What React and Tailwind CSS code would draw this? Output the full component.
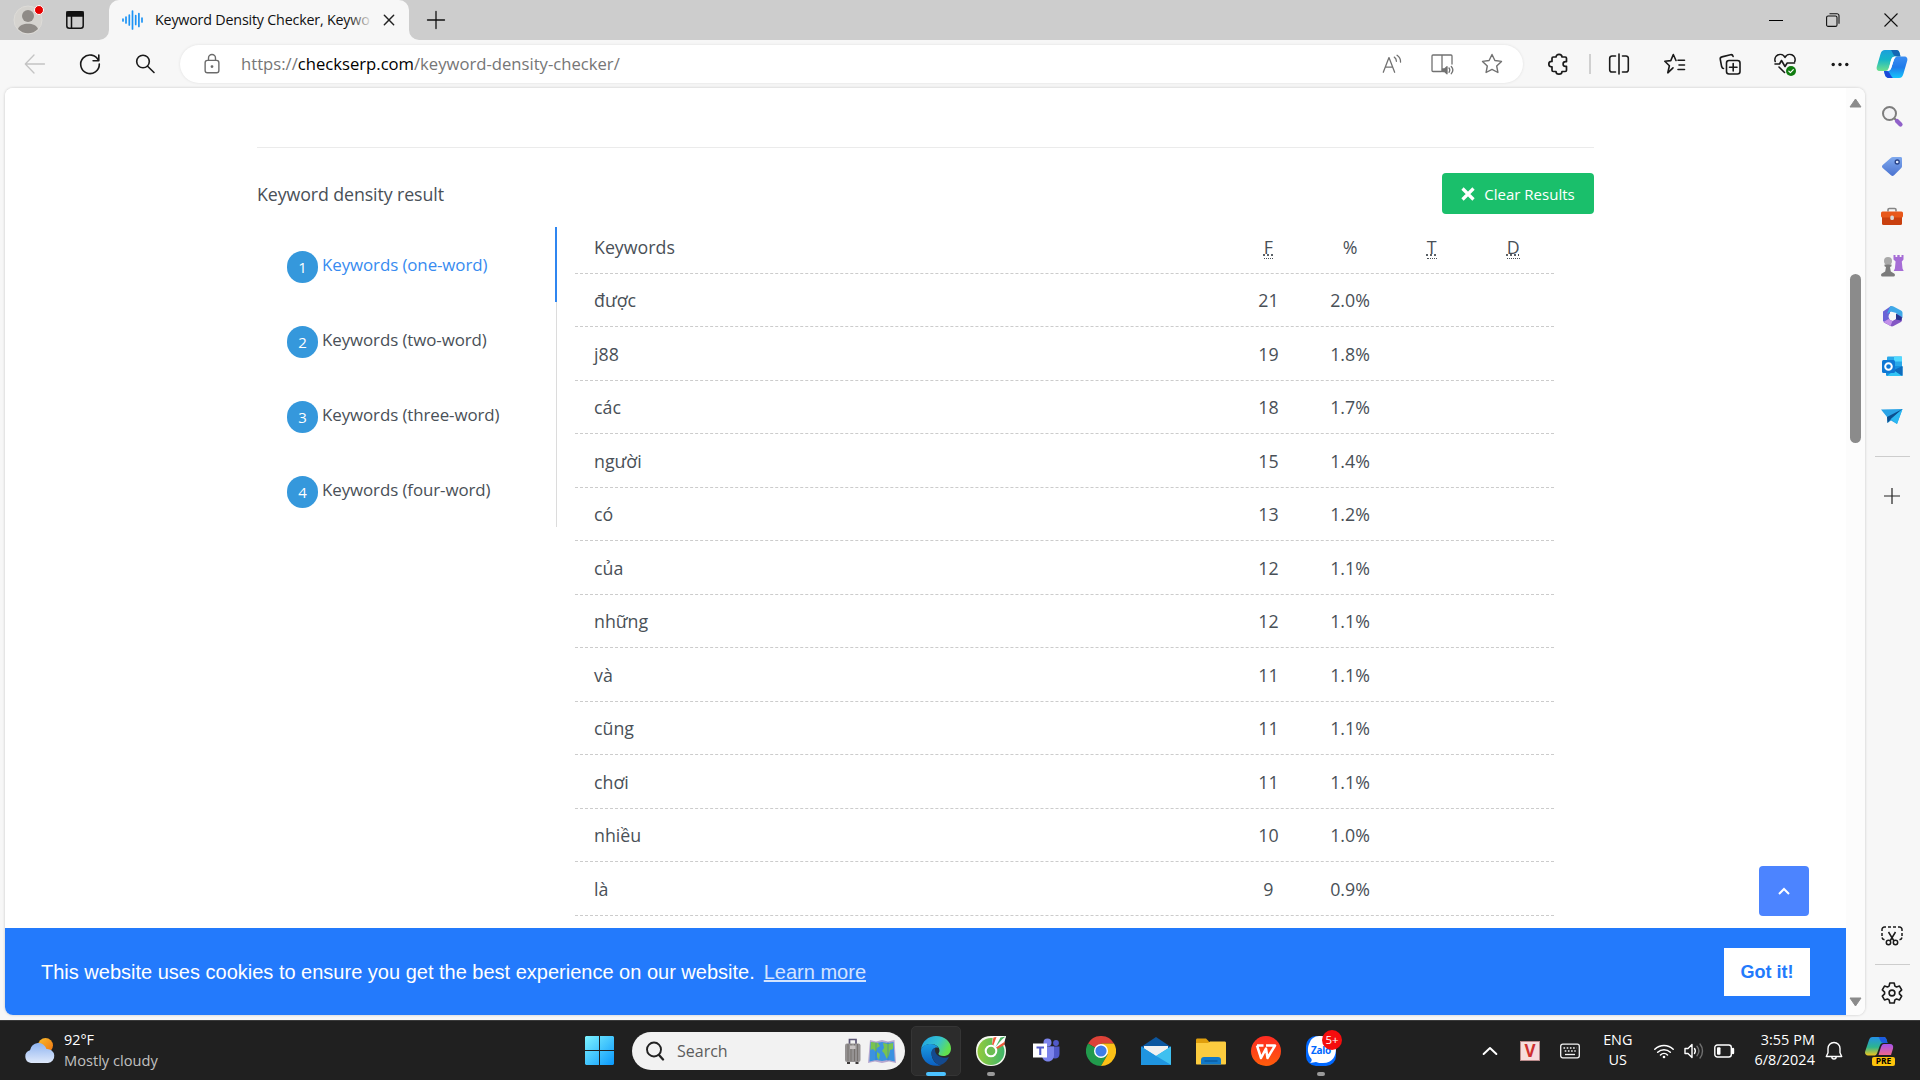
import React from "react";

const ROWS = [
  ["được", "21", "2.0%"],
  ["j88", "19", "1.8%"],
  ["các", "18", "1.7%"],
  ["người", "15", "1.4%"],
  ["có", "13", "1.2%"],
  ["của", "12", "1.1%"],
  ["những", "12", "1.1%"],
  ["và", "11", "1.1%"],
  ["cũng", "11", "1.1%"],
  ["chơi", "11", "1.1%"],
  ["nhiều", "10", "1.0%"],
  ["là", "9", "0.9%"],
];

const NAV = ["Keywords (one-word)", "Keywords (two-word)", "Keywords (three-word)", "Keywords (four-word)"];

function Line({ size = 24, className = "", sw = 1.4, children }) {
  return (
    <svg width={size} height={size} viewBox="0 0 24 24" fill="none" stroke="currentColor" strokeWidth={sw} strokeLinecap="round" strokeLinejoin="round" className={"shrink-0 " + className}>
      {children}
    </svg>
  );
}

const STAR = "M12 2.5l2.9 6 6.6.9-4.8 4.600 1.200 6.500-5.900-3.100-5.900 3.100 1.200-6.500-4.800-4.600 6.600-.9z";

function TabStrip() {
  return (
    <div className="flex h-10 shrink-0 bg-[#cdcdcd]">
      <svg width="32" height="32" viewBox="0 0 32 32" className="ml-3 mt-1 shrink-0">
        <circle cx="16" cy="16" r="14" fill="#d5d3cf" stroke="#dedcd8" />
        <circle cx="16" cy="12" r="6" fill="#8f8b87" />
        <path d="M6 25c2-7 18-7 20 0a14 14 0 0 1-20 0z" fill="#8f8b87" />
        <circle cx="27" cy="6" r="4.500" fill="#e60000" stroke="#fff" />
      </svg>
      <svg width="18" height="18" viewBox="0 0 18 18" className="ml-[22px] mt-[11px] shrink-0" fill="none" stroke="#111" strokeWidth="1.500">
        <rect x="0.800" y="0.800" width="16.400" height="16.400" rx="2.500" />
        <path d="M1 1h16v4H1z" fill="#111" />
        <path d="M5.500 5v12" />
      </svg>
      <div className="relative ml-[25px] flex h-10 w-[300px] items-center rounded-t-[10px] bg-[#f7f7f7] pb-2">
        <svg width="10" height="10" viewBox="0 0 10 10" className="absolute -left-[10px] bottom-0"><path d="M10 0v10H0A10 10 0 0 0 10 0z" fill="#f7f7f7" /></svg>
        <svg width="10" height="10" viewBox="0 0 10 10" className="absolute -right-[10px] bottom-0"><path d="M0 0v10h10A10 10 0 0 1 0 0z" fill="#f7f7f7" /></svg>
        <svg width="21" height="20" viewBox="0 0 21 20" className="ml-[13px] mt-2 shrink-0" stroke="#1c93f5" strokeWidth="1.700" strokeLinecap="round">
          <path d="M1 9v2M4 7v6M7.300 5v10M10.500 1v18M13.700 5.500v9M16.900 3.500v13M20 8v4" />
        </svg>
        <div className="relative ml-[12px] mt-2 w-[218px] overflow-hidden whitespace-nowrap text-[14.3px] leading-5 tracking-[-0.2px] text-[#111]">
          Keyword Density Checker, Keywo
          <div className="absolute inset-y-0 right-0 w-6 bg-gradient-to-r from-transparent to-[#f7f7f7]" />
        </div>
        <Line size={16} sw={2.200} className="ml-[8px] mt-2 text-[#222]"><path d="M5 5l14 14M19 5L5 19" /></Line>
      </div>
      <Line size={24} sw={1.300} className="ml-[15px] mt-2 text-[#111]"><path d="M3.500 12h17M12 3.500v17" /></Line>
      <div className="ml-auto flex items-center text-black">
        <svg width="14" height="14" className="mr-[43px]" stroke="#000"><path d="M0 7.500h14" /></svg>
        <svg width="14" height="14" viewBox="0 0 14 14" className="mr-[44px]" fill="none" stroke="#111" strokeWidth="1.100"><rect x="0.600" y="3" width="10.400" height="10.400" rx="1.500" /><path d="M3.500.8h7.500a2 2 0 0 1 2 2v8" /></svg>
        <svg width="14" height="14" viewBox="0 0 14 14" className="mr-[22px]" stroke="#111" strokeWidth="1.100"><path d="M.5.5l13 13M13.500.5l-13 13" /></svg>
      </div>
    </div>
  );
}

function CopilotEdge() {
  return (
    <svg width="32" height="30" viewBox="0 0 32 30" className="ml-[24px] shrink-0">
      <defs>
        <linearGradient id="ce1" x1="0" y1="0" x2="0" y2="1"><stop offset="0" stopColor="#1b9fdc" /><stop offset=".45" stopColor="#16b5c8" /><stop offset="1" stopColor="#6fe08c" /></linearGradient>
        <linearGradient id="ce2" x1="0" y1="0" x2="0" y2="1"><stop offset="0" stopColor="#3b8df2" /><stop offset=".5" stopColor="#1f7bea" /><stop offset="1" stopColor="#15c5fb" /></linearGradient>
      </defs>
      <path d="M9 1h11c3 0 3.500 2 4.500 6.500H20c-3 0-4 1-4.800 3.500l-2.500 8c-.9 2.500-2 3-4.500 3H4c-3 0-4-2-3-5L4.500 5C5.500 2 6.500 1 9 1z" fill="url(#ce1)" />
      <path d="M15 1h5c3 0 3.500 2 4.500 6.500H20c-2.500 0-3.500-4.500-5-6.500z" fill="#1468b4" />
      <path d="M23 29H13c-3 0-4-2-5-7h2.500c2.500 0 4-1 4.800-3.500l2.500-7.500c.9-2.500 2-3.500 4.500-3.500H28c3 0 4 2 3 5l-3.500 12c-.9 3-2 4.500-4.500 4.500z" fill="url(#ce2)" />
      <path d="M17 29h-4c-3 0-4-2-5-7h2.500c3 0 4 5 6.500 7z" fill="#1b49d8" />
      <path d="M15 11c.8-2.500 2-3.500 4.500-3.500h2.300c-2.300 0-3 1-4 3.500l-2.500 8c-.6 2-1.800 3-4 3 1-.6 1.500-2 2-3.500z" fill="#fff" />
    </svg>
  );
}

function Toolbar() {
  return (
    <div className="flex h-12 shrink-0 items-center bg-[#f7f7f7] text-[#1a1a1a]">
      <Line sw={1.300} className="ml-[23px] text-[#c4c4c4]"><path d="M21.500 12h-19M11 3l-8.700 9 8.700 9" /></Line>
      <Line sw={1.600} className="ml-[31px]"><path d="M20.500 8.500A9.300 9.300 0 1 0 21.300 12M20.800 3v5.700h-5.700" /></Line>
      <Line sw={1.600} className="ml-[31px]"><circle cx="10" cy="9.500" r="6.300" /><path d="M14.600 14.200L21 20.500" /></Line>
      <div className="ml-[23px] flex h-[38px] w-[1343px] items-center rounded-full bg-white shadow-[0_0_3px_rgba(0,0,0,0.1)]">
        <Line size={22} sw={1.500} className="ml-[21px] text-[#6b6b6b]"><rect x="4.500" y="8" width="15" height="13.500" rx="2.500" /><path d="M8.200 8V5.500a3.800 3.800 0 0 1 7.600 0V8" /><circle cx="12" cy="14.800" r=".8" fill="currentColor" /></Line>
        <span className="ml-[18px] text-[16.65px] text-[#767676]">https://<span className="text-black">checkserp.com</span>/keyword-density-checker/</span>
        <div className="ml-auto flex items-center text-[#717171]">
          <Line size={22} className="mr-[27px]"><path d="M2.500 21L8.700 5l6.200 16M4.800 15.500h7.900M14.500 4.500c1.500 1 2.300 2.700 2.300 4.500M17.500 2.500c2.700 1.800 4 4.500 3.800 7.500" /></Line>
          <Line size={24} sw={1.300} className="mr-[26px]"><path d="M12 3v15.500M12 3H3a1 1 0 0 0-1 1v14.500a1 1 0 0 0 1 1h8.500M12 3h9a1 1 0 0 1 1 1v8" /><path d="M12.500 17h2l2.500-2.200v7L14.500 19.600h-2z" fill="currentColor" /><path d="M19 16c.9 1.200.9 3 0 4.300M21.300 14.500c1.900 2.200 1.900 5 0 7.200" /></Line>
          <Line size={24} sw={1.400} className="mr-[19px]"><path d={STAR} /></Line>
        </div>
      </div>
      <Line sw={1.700} className="ml-[24px]"><path d="M9 5a3 2.700 0 0 1 6 0h3.200c.8 0 1.300.5 1.300 1.300v3.300h-1a2.400 2.400 0 0 0 0 4.800h1v3.800c0 .8-.5 1.300-1.300 1.300H15a3 2.700 0 0 1-6 0H6.300c-.8 0-1.300-.5-1.300-1.300v-3.400h-.5a2.700 2.700 0 0 1 0-5.400H5V6.300C5 5.500 5.500 5 6.300 5z" /></Line>
      <div className="ml-[18px] h-5 w-[2px] bg-[#d0d0d0]" />
      <Line sw={1.600} className="ml-[16px]"><path d="M12 2v20M8.500 4H5a2.300 2.300 0 0 0-2.300 2.300v11.400A2.300 2.300 0 0 0 5 20h3.500M15.500 4H19a2.300 2.300 0 0 1 2.300 2.300v11.400A2.300 2.300 0 0 1 19 20h-3.500" /></Line>
      <Line sw={1.600} className="ml-[32px]"><path d="M15 8.300h6.500M16 13h5.500M15 17.500h6.500M10 15.800l-5.200 5 1.600-7L1.800 9.200l6-.6L10.300 2.500l2.700 6" /></Line>
      <Line sw={1.600} className="ml-[31px]"><rect x="8.500" y="8.500" width="13.500" height="13.500" rx="2.500" /><path d="M15.200 11.500v7.500M11.500 15.200H19M5.500 16.500c-1 0-1.500-.8-1.800-1.700L2.300 7.500c-.3-1.200.5-2.300 1.700-2.600l8.500-2.200c1.200-.3 2.300.5 2.600 1.700" /></Line>
      <Line sw={1.600} className="ml-[31px]"><path d="M2.200 9.500A5.300 5.300 0 0 1 12 5.500a5.300 5.300 0 0 1 9.800 4M2 12h4.500l2-3.500 3.500 6 2.200-3.500h7.300M6 15l5.500 5.500" /><circle cx="18" cy="19" r="5" fill="#107c10" stroke="none" /><path d="M15.800 19.100l1.600 1.600 2.900-3" stroke="#fff" strokeWidth="1.200" /></Line>
      <Line className="ml-[31px]"><g fill="currentColor" stroke="none"><circle cx="5.200" cy="12.500" r="1.700" /><circle cx="12" cy="12.500" r="1.700" /><circle cx="18.800" cy="12.500" r="1.700" /></g></Line>
      <CopilotEdge />
    </div>
  );
}

function Abbr({ children }) {
  return <abbr className="mx-auto border-b border-dotted border-[#495057] leading-[22px] underline decoration-dotted underline-offset-1">{children}</abbr>;
}

function Results() {
  return (
    <div className="flex w-[1841px] shrink-0 flex-col overflow-hidden bg-white text-[17.8px] text-[#495057]">
      <div className="ml-[252px] mt-[59px] w-[1337px] border-t border-[#ebebeb]">
        <div className="mt-[25px] flex h-[41px] items-center justify-between">
          <span className="pt-[2px] tracking-[-0.1px]">Keyword density result</span>
          <button className="flex h-[41px] w-[152px] items-center justify-center gap-[9px] rounded bg-[#1abf6b] text-[15px] text-white">
            <svg width="14" height="14" viewBox="0 0 14 14" stroke="#fff" strokeWidth="3.200"><path d="M1.500 1.500l11 11M12.500 1.500l-11 11" /></svg>
            <span className="pt-px">Clear Results</span>
          </button>
        </div>
        <div className="flex">
          <ul className="mt-[13px] h-[300px] w-[300px] shrink-0 border-r border-[#dcdcdc]">
            {NAV.map((label, i) => (
              <li key={label} className={"flex h-[75px] pl-[30px] pt-6 " + (i === 0 ? "-mr-px border-r-2 border-[#2f86f0] text-[#378bf0]" : "")}>
                <span className="flex h-8 w-[31px] items-center justify-center rounded-full bg-[#3598dc] text-[15px] text-white">{i + 1}</span>
                <span className="ml-[4px] text-[16.9px] leading-7 tracking-[-0.09px]">{label}</span>
              </li>
            ))}
          </ul>
          <div className="ml-[18px] mt-[6px] w-[979px]">
            <div className="grid h-[53.500px] grid-cols-12 items-center border-b border-dashed border-[#ccc] pt-[2px] text-center">
              <span className="col-span-8 pl-[19px] text-left">Keywords</span>
              <Abbr>F</Abbr>
              <span>%</span>
              <Abbr>T</Abbr>
              <Abbr>D</Abbr>
            </div>
            {ROWS.map(([k, f, p]) => (
              <div key={k} className="grid h-[53.500px] grid-cols-12 items-center border-b border-dashed border-[#ccc] pt-[2px] text-center">
                <span className="col-span-8 pl-[19px] text-left">{k}</span>
                <span>{f}</span>
                <span>{p}</span>
              </div>
            ))}
          </div>
        </div>
      </div>
    </div>
  );
}

function CookieBar() {
  return (
    <div className="absolute bottom-0 left-0 flex h-[87px] w-[1841px] items-center bg-[#237afc] pl-9 pr-9 font-['Liberation_Sans',Arial,sans-serif] text-[20px] text-white">
      <span>This website uses cookies to ensure you get the best experience on our website.</span>
      <span className="ml-[9px] underline opacity-80">Learn more</span>
      <button className="ml-auto h-12 w-[86px] bg-white pt-px text-[18px] font-bold text-[#237afc]">Got it!</button>
    </div>
  );
}

function Scrollbar() {
  return (
    <div className="flex flex-1 flex-col items-center bg-[#fcfcfc]">
      <svg width="13" height="10" viewBox="0 0 13 10" className="mt-[10px]"><path d="M6.500 1L12 9H1z" fill="#8b8b8b" stroke="#8b8b8b" strokeLinejoin="round" /></svg>
      <div className="mt-[166px] h-[169px] w-[11px] rounded-full bg-[#8b8b8b]" />
      <svg width="13" height="10" viewBox="0 0 13 10" className="mb-2 mt-auto"><path d="M6.500 9L12 1H1z" fill="#8b8b8b" stroke="#8b8b8b" strokeLinejoin="round" /></svg>
    </div>
  );
}

function Sidebar() {
  const s = { width: 24, height: 24, viewBox: "0 0 24 24" };
  return (
    <div className="flex w-[54px] flex-col items-center pt-[16px]">
      <div className="flex flex-col gap-[26px]">
        <svg {...s}><circle cx="9.500" cy="9.500" r="6.500" fill="#f3f3f5" stroke="#7d7d7d" strokeWidth="2" /><path d="M14.500 14.500l2.500 2.500" stroke="#777" strokeWidth="2" /><path d="M17 17l3.500 3.500" stroke="#9061c9" strokeWidth="4.200" strokeLinecap="round" /></svg>
        <svg {...s}><defs><linearGradient id="tg" x1="0" y1="0" x2="0" y2="1"><stop stopColor="#7fa9ee" /><stop offset="1" stopColor="#4a72d0" /></linearGradient></defs><path d="M13 3h7.500c1 0 1.500.5 1.500 1.500V12c0 1-.3 1.600-1 2.300l-7 7c-1 1-2 1-3 0L2.700 14c-1-1-1-2 0-3l8-7c.7-.7 1.300-1 2.300-1z" fill="url(#tg)" /><circle cx="17.200" cy="8" r="2" fill="#dce8ff" stroke="#2a4488" strokeWidth="1.300" /></svg>
        <svg {...s}><path d="M8 7.500V5.800C8 5 8.500 4.500 9.300 4.500h5.400c.8 0 1.300.5 1.300 1.300v1.700" fill="none" stroke="#858585" strokeWidth="1.600" /><rect x="2" y="9" width="20" height="12" rx="1.500" fill="#c9400f" /><rect x="1" y="7.500" width="22" height="6" rx="1.500" fill="#e8581b" /><rect x="10.300" y="11.500" width="3.600" height="4.500" rx="1.500" fill="#d8d8d8" /></svg>
        <svg {...s}><path d="M13.500 1h2v2h1.800V1h2.400v2h1.800V1h2v4.500l-1.700 2 .7 7 1.200 2.500h-10l1.200-2.500.7-7-2.100-2z" fill="#a66dd6" /><circle cx="8" cy="7" r="4" fill="#a9a9a9" /><path d="M4.500 10.500h7v1.700l-1.500.8.800 4.500 3.700 2.300c.8 1 .5 2.700-.8 2.700H2.300c-1.300 0-1.600-1.700-.8-2.700l3.700-2.300L6 13l-1.500-.8z" fill="#7b7b7b" /></svg>
        <svg {...s}><path d="M3 7.500L11 2l4 2.500-5 3.500v9l-3.500 3L3 17z" fill="#6a63d6" /><path d="M10 2.500c1-.8 2.500-.8 3.500 0l7.500 4c1 .6 1.500 1.500 1.500 2.500v5l-6-3.500V9l-6-1.500L7 10z" fill="#3fa9e8" /><path d="M22 13v3c0 1-.5 1.800-1.500 2.300L13.500 22c-1 .6-2 .6-3 0L3.500 18l5-3 4 2 5-3 0-3.500z" fill="#8457c4" /><path d="M16 9.500l6 4-1 3-5-1z" fill="#27358f" /><path d="M3.500 18l5-3 4 2-2 5z" fill="#c391ea" /><circle cx="12.300" cy="12.500" r="3.700" fill="#f7f7f7" /></svg>
        <svg {...s}><rect x="7" y="2.500" width="15" height="12" rx="1" fill="#28a8ea" /><rect x="14" y="2.500" width="8" height="5" fill="#50d9ff" /><rect x="6" y="12" width="16.500" height="10" rx="1.300" fill="#1490df" /><path d="M22.500 12v10L13 16.500z" fill="#0f6cbd" /><path d="M7 22h15L14 16.500z" fill="#32c5f5" /><rect x="2" y="6" width="13" height="13" rx="1.500" fill="#0f78d4" /><circle cx="8.500" cy="12.500" r="3.300" fill="none" stroke="#fff" strokeWidth="2" /></svg>
        <svg {...s}><path d="M1 5.500L22.500 5 17 20l-6-3.500L7.500 19l-.5-6z" fill="#2aa3e6" /><path d="M22.500 5L7 13l.5 6L11 15z" fill="#0c4f8f" /><path d="M22.500 5L11 15l6 5z" fill="#2bb8f2" /></svg>
      </div>
      <div className="mt-[28px] h-px w-[35px] bg-[#cdcdcd]" />
      <svg width="16" height="16" viewBox="0 0 16 16" className="mt-[31px]" stroke="#222" strokeWidth="1.200"><path d="M0 8h16M8 0v16" /></svg>
      <svg width="22" height="20" viewBox="0 0 22 20" className="mt-auto" fill="none" stroke="#1a1a1a" strokeWidth="1.500"><path d="M1 5V3.500A2.500 2.500 0 0 1 3.500 1H5M7 1h3M12 1h3M17 1h1.500A2.500 2.500 0 0 1 21 3.500V5M1 7v3M21 7v3M1 11.500c.3 1.200 1 2 2.500 2.300M21 11.500c-.3 1.200-1 2-2.500 2.300M7.500 6l5.500 9M14.500 6L9 15" /><circle cx="7.500" cy="16.500" r="2.200" /><circle cx="14.500" cy="16.500" r="2.200" /></svg>
      <div className="mt-[18px] h-px w-[35px] bg-[#cdcdcd]" />
      <svg width="24" height="24" viewBox="0 0 24 24" className="mb-[15px] mt-[16px]" fill="none" stroke="#1a1a1a" strokeWidth="1.600" strokeLinejoin="round"><path d="M9.800 2h4.400l.7 3.100 1.600.9 3-.9 2.200 3.800-2.300 2.200v1.800l2.300 2.200-2.200 3.800-3-.9-1.600.9-.7 3.100H9.800l-.7-3.100-1.600-.9-3 .9-2.200-3.800 2.300-2.200v-1.800L2.300 8.900l2.200-3.800 3 .9 1.600-.9z" /><circle cx="12" cy="12" r="2.900" /></svg>
    </div>
  );
}

function Weather() {
  return (
    <svg width="31" height="28" viewBox="0 0 31 28" className="shrink-0">
      <defs><linearGradient id="cl" x1="0" y1="0" x2="0" y2="1"><stop stopColor="#8fb4f0" /><stop offset="1" stopColor="#dfe9fb" /></linearGradient><linearGradient id="sn" x1="0" y1="0" x2="1" y2="1"><stop stopColor="#f8bd2e" /><stop offset="1" stopColor="#f0720f" /></linearGradient></defs>
      <circle cx="21.500" cy="8.500" r="7.500" fill="url(#sn)" />
      <path d="M7 26a6.500 6.500 0 0 1-1-12.700A8.500 8.500 0 0 1 22.500 12 7 7 0 0 1 24 26z" fill="url(#cl)" />
    </svg>
  );
}

function TaskIcons() {
  const b = { width: 30, height: 30, viewBox: "0 0 30 30" };
  return (
    <div className="ml-[6px] flex items-center">
      <div className="relative flex h-[50px] w-[50px] items-center justify-center rounded-[5px] border border-[#353535] bg-[#2c2c2c]">
        <svg {...b}>
          <defs>
            <linearGradient id="eg" x1="0" y1="0" x2="1" y2=".4"><stop stopColor="#1f9fe5" /><stop offset=".6" stopColor="#35c3d0" /><stop offset="1" stopColor="#62e04e" /></linearGradient>
            <linearGradient id="eb" x1="0" y1="0" x2="0" y2="1"><stop stopColor="#1b9de2" /><stop offset="1" stopColor="#0a5fc2" /></linearGradient>
          </defs>
          <path d="M0 14C1 5 7.500 0 15 0c9 0 15 6 15 12.500 0 5-3.500 7.500-7.500 7.500-3.500 0-5-1.300-5-2.300 0-.8 1-1.200 1-3.200C18.500 11 15 8 10 8 5 8 1 10.500 0 14z" fill="url(#eg)" />
          <path d="M0 14c1-4 5-6 9.500-6 4 0 7 1.800 8 4-3-1.500-7 .8-7 5.500 0 5.500 4 11 9.500 11.700C9 32 0 25 0 14z" fill="url(#eb)" />
          <path d="M10.500 17c0-3 1.700-4.700 4-5-1 1.500-1 8 7 9.500 3 .5 5 0 6.500-.8-2 5-6 7.800-9 8.300-5-1-8.500-7-8.500-12z" fill="#144a8f" />
        </svg>
        <div className="absolute -bottom-px h-[4px] w-5 rounded-full bg-[#4cc2ff]" />
      </div>
      <div className="relative ml-[15px] flex h-[50px] w-[30px] items-center justify-center">
        <svg {...b}>
          <defs><linearGradient id="cc" x1="0" y1="0" x2="1" y2="0"><stop stopColor="#93cb3c" /><stop offset="1" stopColor="#3fb56a" /></linearGradient></defs>
          <path d="M0 15C0 6 6 0 15 0h15l-2 8c1.500 2 2 4.500 2 7 0 9-6 15-15 15S0 24 0 15z" fill="#f4f8ee" />
          <circle cx="15" cy="15.500" r="13.500" fill="url(#cc)" /><path d="M16 8L17 0h13l-3 8-6 4z" fill="#fff" />
          <path d="M17.500 1.500l3-.5-3 8-1.500-.4zM29 5.500l-.8 3.500-7.200 4-1-1.500z" fill="#ef5a3a" /><path d="M29.500.5L26 3.500l-6.500 7.500 5-9.500z" fill="#4cb866" />
          <circle cx="15" cy="15" r="5.300" fill="#6bbd52" stroke="#fff" strokeWidth="2" />
        </svg>
        <div className="absolute bottom-0 h-[4px] w-2 rounded-full bg-[#9a9a9a]" />
      </div>
      <svg width="28" height="26" viewBox="0 0 28 26" className="ml-[27px]">
        <circle cx="14.500" cy="4.500" r="4" fill="#7b83eb" /><circle cx="23" cy="5" r="2.900" fill="#5059c9" />
        <path d="M17 8.500h9.500V16c0 3-2 4.500-4.500 4.500-2 0-3.500-1-4-2z" fill="#5059c9" /><path d="M9 8.500h12V17c0 4-2.500 6.500-6 6.500S9 21 9 17z" fill="#7b83eb" />
        <rect x="0" y="5.500" width="14" height="14" fill="#fff" /><path d="M3.500 8.500h7.500v2H8.300v6.500H6.200v-6.500H3.500z" fill="#5059c9" />
      </svg>
      <svg {...b} className="ml-[25px]">
        <path d="M15 15L2 7.500A15 15 0 0 1 28 7.500H15z" fill="#dd4238" /><path d="M15 15l6.500 3.800L15 30A15 15 0 0 1 2 7.500z" fill="#219a4c" /><path d="M15 7.500h13A15 15 0 0 1 15 30l6.500-11.200z" fill="#fbc117" />
        <circle cx="15" cy="15" r="7" fill="#fff" /><circle cx="15" cy="15" r="5.600" fill="#3f7de8" />
      </svg>
      <svg {...b} className="ml-[25px]">
        <path d="M0 11L15 1l15 10v5H0z" fill="#0c57a0" /><path d="M3 10h24v10H3z" fill="#f1f1f1" /><path d="M0 10.500l15 9.500 15-9.500V29H0z" fill="#2ba5ea" /><path d="M30 10.500V29L15 20z" fill="#3fc0f0" /><path d="M0 10.500L15 20 30 29H0z" fill="#1f95e0" />
      </svg>
      <svg {...b} className="ml-[25px]">
        <path d="M0 4c0-1 .6-1.500 1.500-1.500H10L13 5.500V10H0z" fill="#e09f0c" /><path d="M0 7h12l2-1.500h14.500c1 0 1.500.5 1.500 1.500v20.500c0 .8-.5 1-1 1H1c-.6 0-1-.3-1-1z" fill="#fccc3f" /><path d="M5 28.500V24c0-2 1-3 3-3h14c2 0 3 1 3 3v4.500z" fill="#1179c9" /><path d="M8.500 25h13" stroke="#084f8c" />
      </svg>
      <svg {...b} className="ml-[25px]">
        <defs><linearGradient id="wp" x1="0" y1="0" x2="0" y2="1"><stop stopColor="#ff2a22" /><stop offset="1" stopColor="#ff5d0b" /></linearGradient></defs>
        <circle cx="15" cy="15" r="15" fill="url(#wp)" /><path d="M6 9.500h6.500M6 9.500l4 12.500 5-9.500 1.500 9.500L24 9.500h-9" fill="none" stroke="#fff" strokeWidth="2.500" strokeLinejoin="round" />
      </svg>
      <div className="relative ml-[25px] flex h-[50px] w-[30px] items-center justify-center">
        <svg {...b}>
          <rect x="0" y="0" width="30" height="30" rx="10" fill="#0068ff" /><path d="M4 6C6 1 10 0 15 0c9 0 15 4 15 12s-3 15-13 15c-3 0-5 0-7-1l-6 1c1.500-1.500 2-2.500 1.500-4C1 18 1 11 4 6z" fill="#fff" />
        </svg>
        <span className="absolute left-[5px] top-[17px] text-[10px] font-bold leading-[14px] tracking-[-0.3px] text-[#0068ff]">Zalo</span>
        <span className="absolute left-[16px] top-[4px] flex h-5 w-5 items-center justify-center rounded-full bg-[#f50d0d] text-[11.500px] text-white">5+</span>
        <div className="absolute bottom-0 h-[4px] w-2 rounded-full bg-[#9a9a9a]" />
      </div>
    </div>
  );
}

function Taskbar() {
  return (
    <div className="flex h-[60px] shrink-0 items-center border-t border-[#3a3a3a] bg-[#202020] text-[14.4px] text-white">
      <div className="flex w-[585px] items-center gap-[9px] pl-6">
        <Weather />
        <div className="-mt-[2px] leading-5">
          <div>92°F</div>
          <div className="text-[14.65px] text-[#c0c0c0]">Mostly cloudy</div>
        </div>
      </div>
      <svg width="29" height="29" viewBox="0 0 29 29" className="shrink-0">
        <defs><linearGradient id="ws" x1="0" y1="0" x2="1" y2="1"><stop stopColor="#7df3ff" /><stop offset="1" stopColor="#0a98fc" /></linearGradient></defs>
        <path d="M1 0h13v14H0V1zM15 0h13l1 1v13H15zM0 15h14v14H1l-1-1zM15 15h14v13l-1 1H15z" fill="url(#ws)" />
      </svg>
      <div className="ml-[18px] flex h-[38px] w-[273px] items-center rounded-full bg-[#f2f2f2]">
        <svg width="20" height="20" viewBox="0 0 20 20" className="ml-[13px]" fill="none" stroke="#222" strokeWidth="1.900" strokeLinecap="round"><circle cx="9" cy="8.500" r="7" /><path d="M14 14l4 4.500" strokeWidth="2.300" /></svg>
        <span className="ml-3 text-[16px] text-[#5c5c5c]">Search</span>
        <svg width="18" height="28" viewBox="0 0 18 28" className="ml-auto mr-[6px]">
          <path d="M5.500 8V2.500h6.500V8" fill="none" stroke="#5c5675" strokeWidth="1.700" /><rect x="1" y="6.500" width="15.500" height="18.500" rx="2" fill="#959292" /><path d="M4 7v17M7 7v17M10.500 7v17M13.500 7v17" stroke="#77726f" /><rect x="6" y="8.500" width="5.500" height="3.500" fill="#c8c3c3" /><path d="M3 25h3v2H3zM11.500 25h3v2h-3z" fill="#3d3a3a" />
        </svg>
        <svg width="28" height="26" viewBox="0 0 28 26" className="mr-[9px]">
          <path d="M2 2l6 1.500L14 2l6 1.500L26.500 2 28 25l-7-1.500-7 1.500-7-1.500L0 25z" fill="#b8a8d0" /><path d="M2.500 4l5.500 1v17l-6.500 1.500zM8 5l6-1v19l-6-1zM14 4l6 1v17l-6 1zM20 5l5.500-1 1.300 19.500L20 22z" fill="#3b92e0" /><path d="M3 4l7 1 2 3-3 2-1 4-3-3-2.500 1zM9 14l3 2-1 6-2-3zM15 5l5 1 5-1v6l-3 1-1 5-2 4-3-6-2-2 2-3z" fill="#79c34f" /><path d="M20 4v19M8 4.500v18" stroke="#2b78bb" strokeOpacity=".5" />
        </svg>
      </div>
      <TaskIcons />
      <div className="ml-auto flex items-center">
        <Line size={18} sw={2.600} className="mr-[21px]"><path d="M3.500 16L12 8l8.500 8" /></Line>
        <div className="mr-[20px] flex h-5 w-5 items-center justify-center border border-[#b98a8a] bg-[#f7dcdc] text-[17px] font-bold leading-none text-[#cf2f2f]">V</div>
        <svg width="20" height="16" viewBox="0 0 20 16" className="mr-[23px]" fill="none" stroke="#f4f4f4" strokeWidth="1.300"><rect x=".7" y="1.200" width="18.600" height="13.600" rx="2" /><path d="M3.500 5h13M4.700 8h11" strokeDasharray="1.600 1.600" strokeWidth="1.700" /><path d="M5 11.500h10" /></svg>
        <div className="-mt-[2px] mr-[22px] text-center leading-5">ENG<br />US</div>
        <svg width="20" height="16" viewBox="0 0 20 16" className="mr-[10px]" fill="none" stroke="#fff" strokeWidth="1.500" strokeLinecap="round"><path d="M.8 6.300a13 13 0 0 1 18.400 0M3.700 9.200a9 9 0 0 1 12.600 0M6.500 12a5 5 0 0 1 7 0" /><circle cx="10" cy="14" r="1.300" fill="#fff" stroke="none" /></svg>
        <svg width="20" height="18" viewBox="0 0 20 18" className="mr-[10px]" fill="none" stroke="#fff" strokeWidth="1.400" strokeLinecap="round" strokeLinejoin="round"><path d="M1 6.500h3l4-4v13l-4-4H1z" /><path d="M10.500 6.500c1 1.500 1 3.500 0 5" /><path d="M13 4.300c2.300 2.800 2.300 6.600 0 9.400M16 2c3.300 4 3.300 10 0 14" stroke="#707070" /></svg>
        <svg width="21" height="14" viewBox="0 0 21 14" className="mr-[19px]" fill="none" stroke="#fff" strokeWidth="1.400"><rect x=".8" y="1" width="16.500" height="12" rx="2.500" /><path d="M19 5v4" strokeWidth="2.400" strokeLinecap="round" /><rect x="3" y="3.200" width="3.500" height="7.600" rx="1" fill="#fff" stroke="none" /></svg>
        <div className="-mt-[2px] mr-[10px] text-right leading-5 tracking-[0.08px]">3:55 PM<br />6/8/2024</div>
        <svg width="18" height="20" viewBox="0 0 18 20" className="mr-[22px]" fill="none" stroke="#fff" strokeWidth="1.400" strokeLinejoin="round"><path d="M9 1.500c-3.500 0-6 2.700-6 6v4.200L1.300 15.500h15.400L15 11.700V7.500c0-3.300-2.500-6-6-6zM6.800 15.800c0 3 4.400 3 4.400 0" /></svg>
        <div className="relative mr-[25px] h-[30px] w-[30px]">
          <svg width="30" height="26" viewBox="0 0 30 26">
            <defs><linearGradient id="cp" x1="0" y1="0" x2="0" y2="1"><stop stopColor="#2491e8" /><stop offset=".55" stopColor="#2db58d" /><stop offset="1" stopColor="#f2c51d" /></linearGradient><linearGradient id="cq" x1="0" y1="0" x2="0" y2="1"><stop stopColor="#a553ec" /><stop offset="1" stopColor="#f0678c" /></linearGradient></defs>
            <path d="M7.500 1h11c2.500 0 3 2 4 6h-4c-2.500 0-3 1-3.800 3l-2.500 7c-.8 2-1.500 2.500-3.500 2.500H3c-2.500 0-3.500-2-2.700-4.500L4 4c.8-2 1.500-3 3.500-3z" fill="url(#cp)" /><path d="M13.500 1h5c2.500 0 3 2 4 6h-4c-3 0-3.500-4-5-6z" fill="#1c5ce0" />
            <path d="M19 8h6c2.500 0 3.700 2 3 4.500L26 19H13.500L16 11c.8-2 1.500-3 3-3z" fill="url(#cq)" />
          </svg>
          <span className="absolute bottom-0 right-0 flex h-[9px] w-[23px] items-center justify-center rounded-[2px] bg-[#fdc40c] text-[8.500px] font-bold leading-none text-black">PRE</span>
        </div>
      </div>
    </div>
  );
}

export default function App() {
  return (
    <div className="flex h-[1080px] w-[1920px] flex-col overflow-hidden bg-[#f7f7f7] font-['Open_Sans','Noto_Sans',sans-serif]">
      <TabStrip />
      <Toolbar />
      <div className="flex flex-1">
        <div className="relative mb-[5px] ml-[5px] flex w-[1860px] shrink-0 overflow-hidden rounded-lg bg-white shadow-[0_0_3px_rgba(0,0,0,0.2)]">
          <Results />
          <Scrollbar />
          <CookieBar />
          <button className="absolute bottom-[99px] right-[56px] flex h-[50px] w-[50px] items-center justify-center rounded bg-[#4c84ff]">
            <svg width="12" height="8" viewBox="0 0 12 8" fill="none" stroke="#fff" strokeWidth="2"><path d="M1 7l5-5 5 5" /></svg>
          </button>
        </div>
        <Sidebar />
      </div>
      <Taskbar />
    </div>
  );
}
